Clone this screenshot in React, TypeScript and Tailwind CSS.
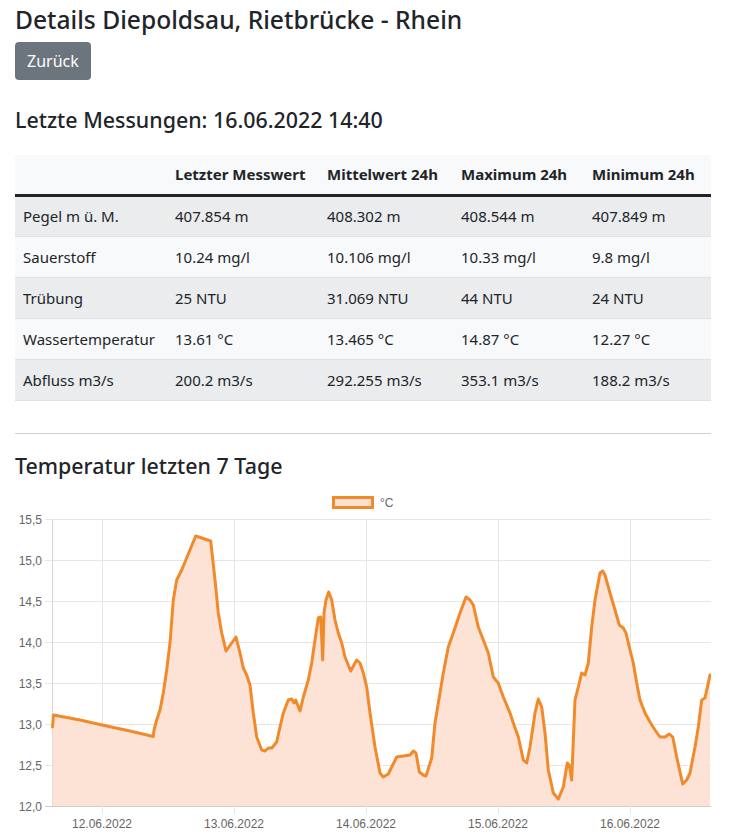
import React from 'react';

interface Row {
  label: string;
  last: string;
  avg: string;
  max: string;
  min: string;
}

const rows: Row[] = [
  { label: 'Pegel m ü. M.', last: '407.854 m', avg: '408.302 m', max: '408.544 m', min: '407.849 m' },
  { label: 'Sauerstoff', last: '10.24 mg/l', avg: '10.106 mg/l', max: '10.33 mg/l', min: '9.8 mg/l' },
  { label: 'Trübung', last: '25 NTU', avg: '31.069 NTU', max: '44 NTU', min: '24 NTU' },
  { label: 'Wassertemperatur', last: '13.61 °C', avg: '13.465 °C', max: '14.87 °C', min: '12.27 °C' },
  { label: 'Abfluss m3/s', last: '200.2 m3/s', avg: '292.255 m3/s', max: '353.1 m3/s', min: '188.2 m3/s' },
];

// Kurvenpunkte in Seitenkoordinaten (x, y)
const points: [number, number][] = [
  [52.5, 727], [53.5, 715], [80, 720], [102, 725], [130, 731], [153.3, 736.5], [154, 730], [156.7, 720],
  [160, 710], [163.3, 693], [166.7, 670], [170, 643], [173.3, 600], [176.7, 580], [181.7, 570],
  [195.7, 536], [210.7, 541], [215, 580], [218.3, 613], [221.7, 633], [226, 651], [236, 637],
  [240, 653], [243.3, 668], [246.7, 675], [250, 685], [253.3, 713], [256.7, 737], [261.7, 750],
  [265, 751], [268.3, 748], [271.7, 748], [276.7, 742], [280, 727], [283.3, 713], [288.3, 700],
  [291.7, 699], [294, 703], [295.7, 700], [300, 711], [303.3, 697], [308.3, 680], [311.7, 663],
  [315, 640], [318.3, 618], [320.7, 617], [322.7, 660], [324, 613], [326, 600], [328.7, 592],
  [331.7, 600], [335, 620], [338.3, 633], [341.7, 643], [345, 657], [350.7, 671], [356.7, 660],
  [360, 663], [363.3, 673], [366.7, 687], [370, 713], [375, 747], [380, 773], [383.3, 777],
  [388.3, 774], [391.7, 767], [396.7, 757], [410, 755], [413.3, 751], [416, 753], [419.3, 772],
  [423.3, 775], [426, 776], [431.7, 758], [435, 723], [438.3, 703], [443.3, 673], [448.3, 647],
  [455, 628], [460, 613], [466, 597], [470, 600], [473.3, 605], [478.3, 627], [483.3, 640],
  [488.3, 653], [493.3, 677], [498.3, 683], [503.3, 697], [510, 713], [513.3, 723], [518.3, 737],
  [523.3, 760], [526.7, 763], [530, 747], [535, 713], [538.3, 699], [541.7, 707], [545, 733],
  [548.3, 770], [553.3, 793], [558.3, 799], [563.3, 787], [567.3, 763], [569.3, 765], [571.7, 780],
  [575, 700], [578.3, 687], [581.7, 673], [585, 675], [588.3, 663], [591.7, 627], [595, 600],
  [600, 573], [602.7, 571], [605, 575], [610, 593], [615, 610], [619.3, 625], [623.3, 628],
  [626, 633], [630, 650], [633.3, 663], [636.7, 683], [640, 700], [645, 713], [650, 722],
  [655, 730], [660, 737], [665, 737], [669.3, 734], [672.7, 737], [676.7, 757], [682.7, 784],
  [686.7, 780], [690, 773], [695, 747], [698.3, 727], [701.7, 700], [705, 698], [710, 675],
];

const linePath = points.map(([x, y], i) => `${i === 0 ? 'M' : 'L'}${x} ${y}`).join(' ');
const areaPath = `${linePath} L710 806 L52.5 806 Z`;

const yTicks = ['15,5', '15,0', '14,5', '14,0', '13,5', '13,0', '12,5', '12,0'];
const xTicks = [
  { x: 102, label: '12.06.2022' },
  { x: 234, label: '13.06.2022' },
  { x: 366, label: '14.06.2022' },
  { x: 498, label: '15.06.2022' },
  { x: 630, label: '16.06.2022' },
];

const TempChart: React.FC = () => (
  <svg width={696} height={347} viewBox="15 488 696 347" className="block">
    {/* Legende */}
    <rect x={333.5} y={497.5} width={39} height={10} fill="#fce1d2" stroke="#f08a2a" strokeWidth={3} />
    <text x={380} y={507} fontSize={12} fill="#666" fontFamily="'Liberation Sans', Arial, sans-serif">°C</text>

    {/* Raster */}
    {yTicks.map((_, i) => {
      const y = 519.5 + i * 41;
      return (
        <line key={i} x1={45} x2={711} y1={y} y2={y} stroke={i === 7 ? '#cfcfcf' : '#e6e6e6'} strokeWidth={1} />
      );
    })}
    <line x1={52.5} x2={52.5} y1={519} y2={806} stroke="#d6d6d6" />
    {xTicks.map((t) => (
      <line key={t.x} x1={t.x + 0.5} x2={t.x + 0.5} y1={519} y2={814} stroke="#e6e6e6" />
    ))}

    {/* Daten */}
    <path d={areaPath} fill="#fce1d2" fillOpacity={0.92} stroke="none" />
    <path d={linePath} fill="none" stroke="#f08a2a" strokeWidth={3} strokeLinejoin="round" strokeLinecap="round" />

    {/* Achsenbeschriftung */}
    {yTicks.map((label, i) => (
      <text
        key={label}
        x={42}
        y={519.5 + i * 41 + 4}
        fontSize={12}
        fill="#666"
        textAnchor="end"
        fontFamily="'Liberation Sans', Arial, sans-serif"
      >
        {label}
      </text>
    ))}
    {xTicks.map((t) => (
      <text
        key={t.label}
        x={t.x}
        y={828}
        fontSize={12}
        fill="#666"
        textAnchor="middle"
        fontFamily="'Liberation Sans', Arial, sans-serif"
      >
        {t.label}
      </text>
    ))}
  </svg>
);

export default function App() {
  return (
    <div className="min-h-[835px] bg-white px-[15px] text-[#212529] font-['Noto_Sans',sans-serif] overflow-hidden">
      <h4 className="pt-[5px] text-[24.6px] leading-[29px] font-medium">Details Diepoldsau, Rietbrücke - Rhein</h4>
      <button className="mt-[8px] h-[38px] rounded-[4px] bg-[#6c757d] px-[12px] text-[16px] text-white">Zurück</button>

      <h5 className="mt-[28px] text-[21.4px] leading-[24px] font-medium">Letzte Messungen: 16.06.2022 14:40</h5>

      <table className="mt-[23px] w-[696px] border-collapse text-[15px]">
        <thead>
          <tr className="h-[40px] border-b-[3px] border-[#212529] bg-[#f8f9fa] text-left">
            <th className="w-[152px] px-[8px] font-bold"></th>
            <th className="w-[152px] px-[8px] font-bold">Letzter Messwert</th>
            <th className="w-[134px] px-[8px] font-bold">Mittelwert 24h</th>
            <th className="w-[131px] px-[8px] font-bold">Maximum 24h</th>
            <th className="px-[8px] font-bold">Minimum 24h</th>
          </tr>
        </thead>
        <tbody>
          {rows.map((r, i) => (
            <tr
              key={r.label}
              className={`h-[41px] border-b border-[#dee2e6] ${i % 2 === 0 ? 'bg-[#eaecee]' : 'bg-[#f8f9fa]'}`}
            >
              <td className="px-[8px] pt-[1px]">{r.label}</td>
              <td className="px-[8px] pt-[1px]">{r.last}</td>
              <td className="px-[8px] pt-[1px]">{r.avg}</td>
              <td className="px-[8px] pt-[1px]">{r.max}</td>
              <td className="px-[8px] pt-[1px]">{r.min}</td>
            </tr>
          ))}
        </tbody>
      </table>

      <hr className="mt-[32px] w-[696px] border-t border-[#cfcfcf]" />

      <h5 className="mt-[20px] text-[21.4px] leading-[24px] font-medium">Temperatur letzten 7 Tage</h5>

      <div className="mt-[10px]">
        <TempChart />
      </div>
    </div>
  );
}
